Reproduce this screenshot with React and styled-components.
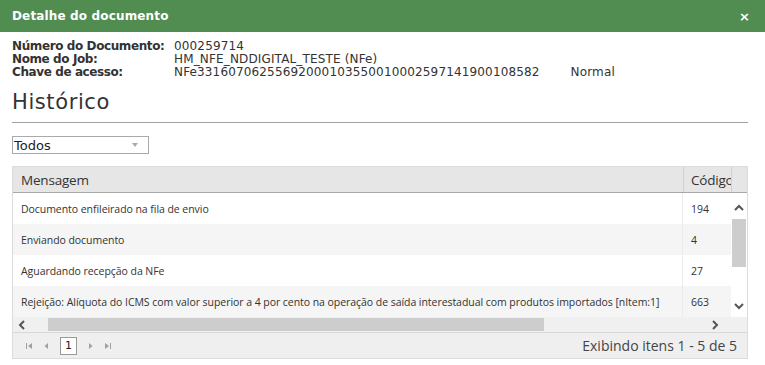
import React from "react";
import styled, { createGlobalStyle } from "styled-components";

const GlobalStyle = createGlobalStyle`
  body {
    margin: 0;
    background: #ffffff;
  }
`;

const rows = [
  { msg: "Documento enfileirado na fila de envio", code: "194" },
  { msg: "Enviando documento", code: "4" },
  { msg: "Aguardando recepção da NFe", code: "27" },
  {
    msg: "Rejeição: Alíquota do ICMS com valor superior a 4 por cento na operação de saída interestadual com produtos importados [nItem:1]",
    code: "663",
  },
];

const Chevron = ({ dir }) => {
  const d = {
    up: "M1 7 L5 3 L9 7",
    down: "M1 3 L5 7 L9 3",
    left: "M7 1 L3 5 L7 9",
    right: "M3 1 L7 5 L3 9",
  }[dir];
  return (
    <svg width="10" height="10" viewBox="0 0 10 10">
      <path d={d} fill="none" stroke="#555" strokeWidth="2" />
    </svg>
  );
};

const PagerIcon = ({ kind }) => {
  const shapes = {
    first: (
      <>
        <rect x="1" y="2" width="1" height="6" fill="#a0a0a0" />
        <path d="M7 2 L3 5 L7 8 Z" fill="#a0a0a0" />
      </>
    ),
    prev: <path d="M6 2 L2.5 5 L6 8 Z" fill="#a0a0a0" />,
    next: <path d="M3 2 L6.5 5 L3 8 Z" fill="#a0a0a0" />,
    last: (
      <>
        <path d="M2 2 L6 5 L2 8 Z" fill="#a0a0a0" />
        <rect x="7" y="2" width="1" height="6" fill="#a0a0a0" />
      </>
    ),
  };
  return (
    <svg width="9" height="10" viewBox="0 0 9 10">
      {shapes[kind]}
    </svg>
  );
};

export default function App() {
  return (
    <>
      <GlobalStyle />
      <Window>
        <TitleBar>
          <Title>Detalhe do documento</Title>
          <Close>×</Close>
        </TitleBar>
        <Body>
          <Info>
            <Label>Número do Documento:</Label>
            <Value>000259714</Value>
            <Label>Nome do Job:</Label>
            <Value>HM_NFE_NDDIGITAL_TESTE (NFe)</Value>
            <Label>Chave de acesso:</Label>
            <Value>
              NFe33160706255692000103550010002597141900108582
              <Extra>Normal</Extra>
            </Value>
          </Info>
          <Heading>Histórico</Heading>
          <Select>
            <span>Todos</span>
            <SelectArrow />
          </Select>
          <Grid>
            <HeaderRow>
              <HeadCell>Mensagem</HeadCell>
              <HeadCell $code>Código</HeadCell>
              <HeadSpacer />
            </HeaderRow>
            <BodyArea>
              <RowsArea>
                {rows.map((r, i) => (
                  <Row key={i} $alt={i % 2 === 1}>
                    <Cell>{r.msg}</Cell>
                    <Cell $code>{r.code}</Cell>
                  </Row>
                ))}
              </RowsArea>
              <VScroll>
                <Chevron dir="up" />
                <VTrack>
                  <VThumb />
                </VTrack>
                <Chevron dir="down" />
              </VScroll>
            </BodyArea>
            <HScrollRow>
              <HScroll>
                <Chevron dir="left" />
                <HTrack>
                  <HThumb />
                </HTrack>
                <Chevron dir="right" />
              </HScroll>
              <Corner />
            </HScrollRow>
            <Pager>
              <PagerNav>
                <PagerIcon kind="first" />
                <PagerIcon kind="prev" />
                <PageBox>1</PageBox>
                <PagerIcon kind="next" />
                <PagerIcon kind="last" />
              </PagerNav>
              <PagerInfo>Exibindo itens 1 - 5 de 5</PagerInfo>
            </Pager>
          </Grid>
        </Body>
      </Window>
    </>
  );
}

const Window = styled.div`
  width: 765px;
  height: 365px;
  background: #ffffff;
  overflow: hidden;
  font-family: "DejaVu Sans", Verdana, sans-serif;
`;

const TitleBar = styled.div`
  height: 32px;
  background: #518c51;
  display: flex;
  align-items: center;
  justify-content: space-between;
  padding: 0 15px 0 12px;
  color: #ffffff;
`;

const Title = styled.span`
  font-weight: bold;
  font-size: 12px;
  letter-spacing: 0.15px;
`;

const Close = styled.span`
  font-weight: bold;
  font-size: 13px;
`;

const Body = styled.div`
  padding: 8px 17px 0 12px;
`;

const Info = styled.div`
  display: grid;
  grid-template-columns: 162px 1fr;
  font-size: 12px;
  line-height: 13px;
  color: #333333;
`;

const Label = styled.span`
  font-weight: bold;
  letter-spacing: -0.4px;
`;

const Value = styled.span`
  display: flex;
  letter-spacing: 0.15px;
`;

const Extra = styled.span`
  margin-left: 31px;
`;

const Heading = styled.div`
  font-size: 21px;
  line-height: 24px;
  color: #333333;
  padding: 11px 0 8px;
  border-bottom: 1px solid #a0a0a0;
  letter-spacing: 0.6px;
`;

const Select = styled.div`
  margin-top: 13px;
  height: 16px;
  border: 1px solid #aaaaaa;
  display: flex;
  align-items: center;
  justify-content: space-between;
  padding: 0 10px 0 1px;
  box-sizing: content-box;
  font-size: 13px;
  color: #222222;
  width: 124px;
`;

const SelectArrow = styled.span`
  width: 0;
  height: 0;
  border-left: 3px solid transparent;
  border-right: 3px solid transparent;
  border-top: 4px solid #aaaaaa;
`;

const Grid = styled.div`
  margin-top: 12px;
  border: 1px solid #dcdcdc;
  font-family: "Open Sans", "Noto Sans", sans-serif;
  color: #333333;
`;

const HeaderRow = styled.div`
  display: flex;
  height: 25px;
  background: #e6e6e6;
  border-bottom: 1px solid #a8a8a8;
`;

const HeadCell = styled.div`
  flex: ${({ $code }) => ($code ? "0 0 49px" : "1")};
  padding-left: ${({ $code }) => ($code ? "7px" : "8px")};
  box-sizing: border-box;
  display: flex;
  align-items: center;
  font-size: 13.5px;
  overflow: hidden;
  white-space: nowrap;
  letter-spacing: -0.2px;
  border-left: ${({ $code }) => ($code ? "1px solid #d0d0d0" : "none")};
  border-right: ${({ $code }) => ($code ? "1px solid #d0d0d0" : "none")};
`;

const HeadSpacer = styled.div`
  width: 15px;
`;

const BodyArea = styled.div`
  display: flex;
`;

const RowsArea = styled.div`
  flex: 1;
`;

const Row = styled.div`
  display: flex;
  height: 31px;
  background: ${({ $alt }) => ($alt ? "#f5f5f5" : "#ffffff")};
`;

const Cell = styled.div`
  flex: ${({ $code }) => ($code ? "0 0 49px" : "1")};
  padding-left: 8px;
  box-sizing: border-box;
  display: flex;
  align-items: center;
  font-size: 10.5px;
  white-space: nowrap;
  overflow: hidden;
  letter-spacing: -0.05px;
  border-left: ${({ $code }) => ($code ? "1px solid #ececec" : "none")};
`;

const VScroll = styled.div`
  width: 16px;
  display: flex;
  flex-direction: column;
  align-items: center;
  padding: 10px 0 6px;
  box-sizing: border-box;
  background: #ffffff;
`;

const VTrack = styled.div`
  flex: 1;
  width: 100%;
  padding: 6px 1px 20px;
  box-sizing: border-box;
`;

const VThumb = styled.div`
  height: 48px;
  background: #cdcdcd;
`;

const HScrollRow = styled.div`
  display: flex;
  height: 15px;
`;

const HScroll = styled.div`
  flex: 1;
  display: flex;
  align-items: center;
  padding: 0 11px 0 4px;
  background: #f0f0f0;
`;

const HTrack = styled.div`
  flex: 1;
  height: 100%;
  padding: 1px 166px 1px 21px;
  box-sizing: border-box;
  display: flex;
`;

const HThumb = styled.div`
  flex: 1;
  background: #cdcdcd;
`;

const Corner = styled.div`
  width: 16px;
  background: #f0f0f0;
`;

const Pager = styled.div`
  height: 25px;
  background: #efefef;
  border-top: 1px solid #d8d8d8;
  display: flex;
  align-items: center;
  justify-content: space-between;
  padding: 0 10px 0 12px;
`;

const PagerNav = styled.div`
  display: flex;
  align-items: center;
  gap: 8px;
`;

const PageBox = styled.div`
  width: 15px;
  height: 16px;
  margin: 0 1px;
  border: 1px solid #999999;
  background: #ffffff;
  font-family: "DejaVu Sans", Verdana, sans-serif;
  font-size: 11px;
  color: #222222;
  display: flex;
  align-items: center;
  justify-content: center;
`;

const PagerInfo = styled.div`
  font-size: 14px;
  color: #444444;
  letter-spacing: 0px;
`;
